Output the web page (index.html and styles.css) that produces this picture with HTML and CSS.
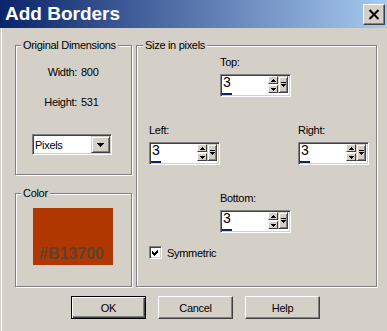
FILE: index.html
```html
<!DOCTYPE html>
<html lang="en">
  <head>
    <meta charset="utf-8" />
    <title>Add Borders</title>
    <link rel="stylesheet" href="styles.css">
  </head>
  <body>
    <div class="window">
      <div class="titlebar">
        <span class="title">Add Borders</span>
        <span class="close-btn">
          <svg width="12" height="11" viewBox="0 0 12 11"><path d="M1.5 1 L10.5 10 M10.5 1 L1.5 10" stroke="#000" stroke-width="2" /></svg>
        </span>
      </div>

      <div class="content">
        <div class="left-col">
          <fieldset class="group dims">
            <legend>Original Dimensions</legend>
            <div class="dim-grid">
              <span class="dim-label">Width:</span><span>800</span>
              <span class="dim-label">Height:</span><span>531</span>
            </div>
            <div class="combo">
              <span class="combo-text">Pixels</span>
              <span class="combo-btn">
                <svg width="7" height="4" viewBox="0 0 7 4" shape-rendering="crispEdges"><path d="M0 0 H7 V1 H6 V2 H5 V3 H4 V4 H3 V3 H2 V2 H1 V1 H0 Z" fill="#000" /></svg>
              </span>
            </div>
          </fieldset>

          <fieldset class="group color">
            <legend>Color</legend>
            <div class="swatch"><span>#B13700</span></div>
          </fieldset>
        </div>

        <fieldset class="group size">
          <legend>Size in pixels</legend>
          <div class="size-grid">
            <div class="field f-top">
              <div class="field-label">Top:</div>
              <div class="spin">
                <div class="spin-text"><span class="spin-value">3</span><span class="spin-bar"></span></div>
                <div class="spin-arrows">
                  <span class="sbtn"><svg width="5" height="3" viewBox="0 0 5 3" shape-rendering="crispEdges"><path d="M2 0 H3 V1 H4 V2 H5 V3 H0 V2 H1 V1 H2 Z" fill="#000" /></svg></span>
                  <span class="sbtn"><svg width="5" height="3" viewBox="0 0 5 3" shape-rendering="crispEdges"><path d="M0 0 H5 V1 H4 V2 H3 V3 H2 V2 H1 V1 H0 Z" fill="#000" /></svg></span>
                </div>
                <span class="sbtn pop"><svg width="5" height="5" viewBox="0 0 5 5" shape-rendering="crispEdges"><path d="M0 0 H5 V1 H0 Z M0 2 H5 V3 H4 V4 H3 V5 H2 V4 H1 V3 H0 Z" fill="#000" /></svg></span>
              </div>
            </div>

            <div class="field f-left">
              <div class="field-label">Left:</div>
              <div class="spin">
                <div class="spin-text"><span class="spin-value">3</span><span class="spin-bar"></span></div>
                <div class="spin-arrows">
                  <span class="sbtn"><svg width="5" height="3" viewBox="0 0 5 3" shape-rendering="crispEdges"><path d="M2 0 H3 V1 H4 V2 H5 V3 H0 V2 H1 V1 H2 Z" fill="#000" /></svg></span>
                  <span class="sbtn"><svg width="5" height="3" viewBox="0 0 5 3" shape-rendering="crispEdges"><path d="M0 0 H5 V1 H4 V2 H3 V3 H2 V2 H1 V1 H0 Z" fill="#000" /></svg></span>
                </div>
                <span class="sbtn pop"><svg width="5" height="5" viewBox="0 0 5 5" shape-rendering="crispEdges"><path d="M0 0 H5 V1 H0 Z M0 2 H5 V3 H4 V4 H3 V5 H2 V4 H1 V3 H0 Z" fill="#000" /></svg></span>
              </div>
            </div>

            <div class="field f-right">
              <div class="field-label">Right:</div>
              <div class="spin">
                <div class="spin-text"><span class="spin-value">3</span><span class="spin-bar"></span></div>
                <div class="spin-arrows">
                  <span class="sbtn"><svg width="5" height="3" viewBox="0 0 5 3" shape-rendering="crispEdges"><path d="M2 0 H3 V1 H4 V2 H5 V3 H0 V2 H1 V1 H2 Z" fill="#000" /></svg></span>
                  <span class="sbtn"><svg width="5" height="3" viewBox="0 0 5 3" shape-rendering="crispEdges"><path d="M0 0 H5 V1 H4 V2 H3 V3 H2 V2 H1 V1 H0 Z" fill="#000" /></svg></span>
                </div>
                <span class="sbtn pop"><svg width="5" height="5" viewBox="0 0 5 5" shape-rendering="crispEdges"><path d="M0 0 H5 V1 H0 Z M0 2 H5 V3 H4 V4 H3 V5 H2 V4 H1 V3 H0 Z" fill="#000" /></svg></span>
              </div>
            </div>

            <div class="field f-bottom">
              <div class="field-label">Bottom:</div>
              <div class="spin">
                <div class="spin-text"><span class="spin-value">3</span><span class="spin-bar"></span></div>
                <div class="spin-arrows">
                  <span class="sbtn"><svg width="5" height="3" viewBox="0 0 5 3" shape-rendering="crispEdges"><path d="M2 0 H3 V1 H4 V2 H5 V3 H0 V2 H1 V1 H2 Z" fill="#000" /></svg></span>
                  <span class="sbtn"><svg width="5" height="3" viewBox="0 0 5 3" shape-rendering="crispEdges"><path d="M0 0 H5 V1 H4 V2 H3 V3 H2 V2 H1 V1 H0 Z" fill="#000" /></svg></span>
                </div>
                <span class="sbtn pop"><svg width="5" height="5" viewBox="0 0 5 5" shape-rendering="crispEdges"><path d="M0 0 H5 V1 H0 Z M0 2 H5 V3 H4 V4 H3 V5 H2 V4 H1 V3 H0 Z" fill="#000" /></svg></span>
              </div>
            </div>
          </div>

          <div class="check">
            <span class="checkbox">
              <svg width="9" height="9" viewBox="0 0 9 9" shape-rendering="crispEdges"><path d="M1 3 L3 5 L7 1 L7 4 L3 8 L1 6 Z" fill="#000" /></svg>
            </span>
            <span>Symmetric</span>
          </div>
        </fieldset>
      </div>

      <div class="buttons">
        <span class="btn default">OK</span>
        <span class="btn">Cancel</span>
        <span class="btn">Help</span>
      </div>
    </div>
  </body>
</html>
```

FILE: styles.css
```css
* {
  box-sizing: border-box;
}
body {
  margin: 0;
  background: #d4d0c8;
  color: #000;
  font-family: "Liberation Sans", Arial, sans-serif;
  font-size: 11px;
  letter-spacing: -0.3px;
}
.window {
  width: 387px;
  height: 331px;
  background: #d4d0c8;
  box-shadow: inset 1px 0 #d4d0c8, inset 2px 0 #fff;
}

/* title bar */
.titlebar {
  height: 28px;
  display: flex;
  align-items: center;
  justify-content: space-between;
  padding: 0 2px 0 5px;
  background: linear-gradient(to right, #0a246a, #a6caf0);
}
.title {
  color: #fff;
  font-size: 19px;
  font-weight: bold;
  letter-spacing: 0;
}
.close-btn {
  width: 22px;
  height: 21px;
  display: flex;
  align-items: center;
  justify-content: center;
  background: #d4d0c8;
  border: 1px solid;
  border-color: #fff #404040 #404040 #fff;
  box-shadow: inset -1px -1px #808080;
}

/* group boxes */
.content {
  display: flex;
  gap: 4px;
  padding: 11px 0 0 15px;
}
.left-col {
  width: 117px;
  display: flex;
  flex-direction: column;
  gap: 12px;
}
.group {
  margin: 0;
  padding: 0;
  min-width: 0;
  border: 1px solid #808080;
  box-shadow: inset 1px 1px #fff, 1px 1px #fff;
}
.group legend {
  margin-left: 5px;
  padding: 0 2px;
  line-height: 13px;
  background: #d4d0c8;
}
.dims {
  height: 136px;
}
.color {
  height: 100px;
}
.size {
  width: 241px;
  height: 248px;
}
.size legend {
  margin-left: 6px;
}

/* original dimensions */
.dim-grid {
  display: grid;
  grid-template-columns: 61px auto;
  column-gap: 4px;
  row-gap: 17px;
  margin-top: 14px;
  line-height: 13px;
}
.dim-label {
  text-align: right;
}
.combo {
  display: flex;
  align-items: center;
  width: 80px;
  height: 21px;
  margin: 25px 0 0 16px;
  padding: 1px;
  background: #fff;
  border: 1px solid;
  border-color: #808080 #fff #fff #808080;
  box-shadow: inset 1px 1px #404040, inset -1px -1px #d4d0c8;
}
.combo-text {
  flex: 1;
  padding-left: 1px;
}
.combo-btn {
  width: 19px;
  height: 17px;
  display: flex;
  align-items: center;
  justify-content: center;
  background: #d4d0c8;
  border: 1px solid;
  border-color: #d4d0c8 #404040 #404040 #d4d0c8;
  box-shadow: inset 1px 1px #fff, inset -1px -1px #808080;
}

/* color */
.swatch {
  width: 80px;
  height: 57px;
  margin: 8px 0 0 17px;
  display: flex;
  align-items: flex-end;
  padding: 0 0 3px 6px;
  background: #b13700;
  color: #5a4234;
  font-size: 16px;
  font-weight: bold;
  line-height: 16px;
  letter-spacing: 0;
}

/* size in pixels */
.size-grid {
  display: grid;
  grid-template-columns: 71px 78px 71px;
  row-gap: 27px;
  padding: 4px 0 0 12px;
}
.f-top {
  grid-column: 2;
  grid-row: 1;
}
.f-left {
  grid-column: 1;
  grid-row: 2;
}
.f-right {
  grid-column: 3;
  grid-row: 2;
}
.f-bottom {
  grid-column: 2;
  grid-row: 3;
}
.field-label {
  line-height: 13px;
  margin-bottom: 5px;
}
.spin {
  display: flex;
  width: 71px;
  height: 23px;
  padding: 1px;
  background: #fff;
  border: 1px solid;
  border-color: #808080 #fff #fff #808080;
  box-shadow: inset 1px 1px #404040, inset -1px -1px #d4d0c8;
}
.spin-text {
  width: 46px;
  display: flex;
  flex-direction: column;
}
.spin-value {
  padding-left: 1px;
  font-size: 14px;
  line-height: 12px;
  letter-spacing: 0;
}
.spin-bar {
  width: 10px;
  height: 2px;
  margin-top: auto;
  background: #0a246a;
}
.spin-arrows {
  display: flex;
  flex-direction: column;
  gap: 1px;
}
.sbtn {
  width: 10px;
  height: 8px;
  display: flex;
  align-items: center;
  justify-content: center;
  background: #d4d0c8;
  border: 1px solid;
  border-color: #fff #404040 #404040 #fff;
}
.sbtn.pop {
  height: 17px;
  border-color: #d4d0c8 #404040 #404040 #d4d0c8;
  box-shadow: inset 1px 1px #fff, inset -1px -1px #808080;
}
.check {
  display: flex;
  align-items: center;
  gap: 5px;
  margin: 13px 0 0 12px;
}
.checkbox {
  width: 13px;
  height: 13px;
  display: flex;
  align-items: center;
  justify-content: center;
  background: #fff;
  border: 1px solid;
  border-color: #808080 #fff #fff #808080;
  box-shadow: inset 1px 1px #404040, inset -1px -1px #d4d0c8;
}

/* dialog buttons */
.buttons {
  display: flex;
  justify-content: center;
  gap: 12px;
  margin-top: 9px;
  padding-left: 4px;
}
.btn {
  width: 75px;
  height: 23px;
  display: flex;
  align-items: center;
  justify-content: center;
  background: #d4d0c8;
  border: 1px solid;
  border-color: #fff #404040 #404040 #fff;
  box-shadow: inset -1px -1px #808080;
}
.btn.default {
  border-color: #000;
  box-shadow: inset 1px 1px #fff, inset -1px -1px #404040, inset -2px -2px #808080;
}
```
